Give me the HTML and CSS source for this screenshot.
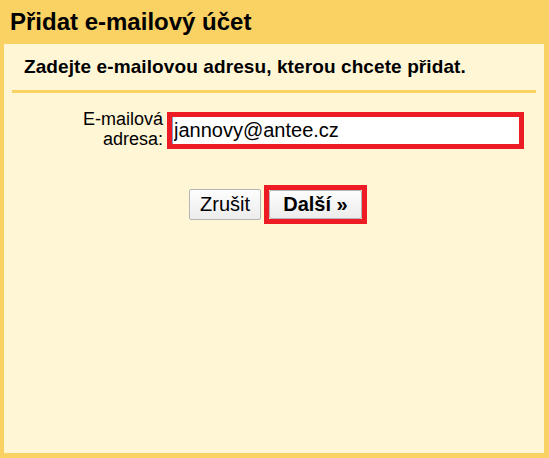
FILE: index.html
```html
<!DOCTYPE html>
<html lang="cs">
<head>
    <meta charset="UTF-8">
    <title>Přidat e-mailový účet</title>
    <link rel="stylesheet" href="styles.css">
</head>
<body>
    <div class="dialog">
        <h1 class="dialog-title">Přidat e-mailový účet</h1>
        <div class="panel">
            <p class="intro">Zadejte e-mailovou adresu, kterou chcete přidat.</p>
            <div class="field-row">
                <label class="field-label" for="email">E-mailová<br>adresa:</label>
                <div class="highlight input-box">
                    <input id="email" type="text" value="jannovy@antee.cz">
                </div>
            </div>
            <div class="actions">
                <button class="btn">Zrušit</button>
                <div class="highlight next-box">
                    <button class="btn btn-next">Další&nbsp;»</button>
                </div>
            </div>
        </div>
    </div>
</body>
</html>
```

FILE: styles.css
```css
html, body {
    margin: 0;
    height: 100%;
}
body {
    font-family: "Liberation Sans", Arial, sans-serif;
    color: #000;
}
.dialog {
    background: #fad163;
    height: 100%;
    box-sizing: border-box;
    padding: 0 5px 5px 4px;
    display: flex;
    flex-direction: column;
}
.dialog-title {
    margin: 0;
    height: 44px;
    padding-left: 6px;
    font-size: 24px;
    line-height: 44px;
    font-weight: bold;
}
.panel {
    flex: 1;
    background: #fff6d6;
    padding: 0 8px;
}
.intro {
    margin: 0;
    padding: 12px 0 0 12px;
    height: 34px;
    font-size: 19px;
    line-height: 22px;
    letter-spacing: 0.1px;
    font-weight: bold;
    border-bottom: 3px solid #fad163;
}
.field-row {
    display: flex;
    align-items: flex-start;
    margin-top: 19px;
}
.field-label {
    width: 151px;
    text-align: right;
    font-size: 18px;
    line-height: 20px;
    margin-top: -3px;
    padding-right: 4px;
}
.highlight {
    border: 5px solid #ed1c24;
}
.input-box {
    width: 347px;
    height: 27px;
    background: #fff;
}
.input-box input {
    border: 0;
    border-left: 1px solid #7a9cd3;
    outline: none;
    margin: 0;
    padding: 0 0 0 1px;
    width: 100%;
    height: 27px;
    box-sizing: border-box;
    background: #fff;
    font-family: "Liberation Sans", Arial, sans-serif;
    font-size: 20px;
    color: #000;
}
.actions {
    display: flex;
    align-items: center;
    margin-top: 36px;
    padding-left: 177px;
    gap: 3px;
}
.btn {
    height: 31px;
    padding: 0 10px;
    border: 1px solid #b5b5b5;
    border-radius: 2px;
    background: linear-gradient(#fdfdfd, #ececec);
    font-family: "Liberation Sans", Arial, sans-serif;
    font-size: 20px;
    color: #000;
}
.next-box {
    height: 29px;
}
.btn-next {
    height: 29px;
    width: 93px;
    font-weight: bold;
    padding: 0;
}
```
